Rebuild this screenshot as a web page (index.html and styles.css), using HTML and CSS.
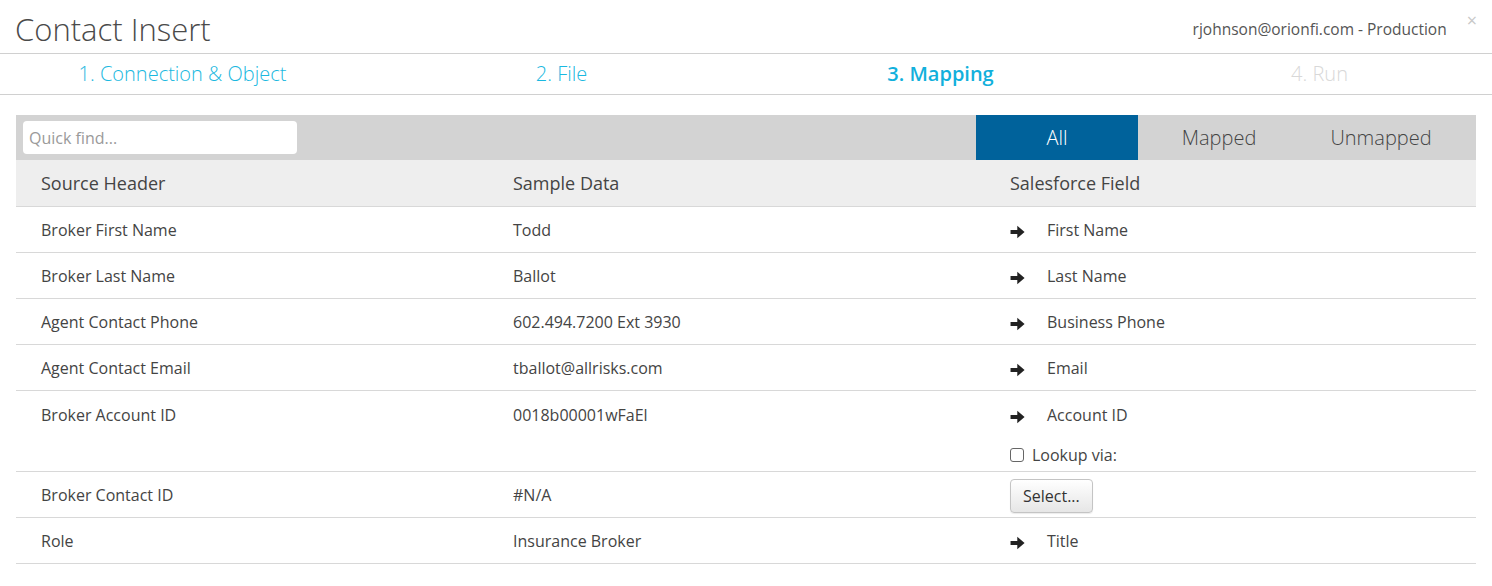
FILE: index.html
```html
<!DOCTYPE html>
<html lang="en">
<head>
    <meta charset="UTF-8">
    <title>Contact Insert</title>
    <link rel="stylesheet" href="styles.css">
</head>
<body>

<!-- Modal header -->
<div class="modal-header">
    <h1 class="modal-title">Contact Insert</h1>
    <span class="org">rjohnson@orionfi.com - Production</span>
    <span class="close">&times;</span>
</div>

<!-- Wizard steps -->
<div class="steps">
    <div class="step done">1. Connection &amp; Object</div>
    <div class="step done">2. File</div>
    <div class="step active">3. Mapping</div>
    <div class="step todo">4. Run</div>
</div>

<div class="content">
    <div class="toolbar">
        <input class="quick-find" type="text" placeholder="Quick find...">
        <div class="filter">
            <button class="filter-btn selected">All</button>
            <button class="filter-btn">Mapped</button>
            <button class="filter-btn">Unmapped</button>
        </div>
    </div>

    <div class="grid head">
        <div class="cell">Source Header</div>
        <div class="cell">Sample Data</div>
        <div class="cell">Salesforce Field</div>
    </div>

    <div class="grid row">
        <div class="cell">Broker First Name</div>
        <div class="cell">Todd</div>
        <div class="cell field"><svg class="arrow" viewBox="0 0 14 13"><path d="M0.5 4.6h6.3V0.6L13.6 6.5 6.8 12.4V8.4H0.5z"/></svg>First Name</div>
    </div>
    <div class="grid row">
        <div class="cell">Broker Last Name</div>
        <div class="cell">Ballot</div>
        <div class="cell field"><svg class="arrow" viewBox="0 0 14 13"><path d="M0.5 4.6h6.3V0.6L13.6 6.5 6.8 12.4V8.4H0.5z"/></svg>Last Name</div>
    </div>
    <div class="grid row">
        <div class="cell">Agent Contact Phone</div>
        <div class="cell">602.494.7200 Ext 3930</div>
        <div class="cell field"><svg class="arrow" viewBox="0 0 14 13"><path d="M0.5 4.6h6.3V0.6L13.6 6.5 6.8 12.4V8.4H0.5z"/></svg>Business Phone</div>
    </div>
    <div class="grid row">
        <div class="cell">Agent Contact Email</div>
        <div class="cell">tballot@allrisks.com</div>
        <div class="cell field"><svg class="arrow" viewBox="0 0 14 13"><path d="M0.5 4.6h6.3V0.6L13.6 6.5 6.8 12.4V8.4H0.5z"/></svg>Email</div>
    </div>
    <div class="grid row tall">
        <div class="cell">Broker Account ID</div>
        <div class="cell">0018b00001wFaEl</div>
        <div class="cell">
            <div class="field"><svg class="arrow" viewBox="0 0 14 13"><path d="M0.5 4.6h6.3V0.6L13.6 6.5 6.8 12.4V8.4H0.5z"/></svg>Account ID</div>
            <label class="lookup"><span class="check"></span>Lookup via:</label>
        </div>
    </div>
    <div class="grid row">
        <div class="cell">Broker Contact ID</div>
        <div class="cell">#N/A</div>
        <div class="cell"><button class="select-btn">Select...</button></div>
    </div>
    <div class="grid row">
        <div class="cell">Role</div>
        <div class="cell">Insurance Broker</div>
        <div class="cell field"><svg class="arrow" viewBox="0 0 14 13"><path d="M0.5 4.6h6.3V0.6L13.6 6.5 6.8 12.4V8.4H0.5z"/></svg>Title</div>
    </div>
</div>

</body>
</html>
```

FILE: styles.css
```css
body {
    margin: 0;
    font-family: "Open Sans", sans-serif;
    color: #444;
    background: #fff;
    overflow: hidden;
}

/* Header */
.modal-header {
    display: flex;
    align-items: center;
    height: 49px;
    padding: 4px 15px 0;
    border-bottom: 1px solid #d0d0d0;
}

.modal-title {
    flex: 1;
    margin: 0;
    font-size: 31px;
    font-weight: 300;
    color: #4a4a4a;
}

.org {
    font-size: 15.5px;
    color: #555;
    margin-right: 20px;
}

.close {
    align-self: flex-start;
    margin-top: 4px;
    font-size: 18px;
    color: #c8c8c8;
}

/* Steps */
.steps {
    display: grid;
    grid-template-columns: repeat(4, 379px);
    margin-left: -7px;
    height: 40px;
    border-bottom: 1px solid #d0d0d0;
    align-items: center;
}

.step {
    text-align: center;
    font-size: 20px;
    font-weight: 300;
    color: #1ab8e0;
    margin-top: -2px;
}

.step.active {
    font-weight: 600;
    color: #12b0dc;
}

.step.todo {
    color: #d8d8d8;
}

/* Content */
.content {
    padding: 20px 16px 0;
}

.toolbar {
    display: flex;
    align-items: center;
    justify-content: space-between;
    height: 45px;
    background: #d3d3d3;
    padding: 0 14px 0 7px;
}

.quick-find {
    box-sizing: border-box;
    width: 274px;
    height: 33px;
    border: none;
    border-radius: 4px;
    padding: 0 6px;
    font-family: "Open Sans", sans-serif;
    font-size: 16px;
    color: #444;
}

.quick-find::placeholder {
    color: #9a9a9a;
}

.filter {
    display: flex;
    height: 45px;
}

.filter-btn {
    width: 162px;
    border: none;
    background: transparent;
    font-family: "Open Sans", sans-serif;
    font-size: 20px;
    font-weight: 300;
    color: #444;
}

.filter-btn.selected {
    background: #00629b;
    color: #fff;
}

/* Table */
.grid {
    display: grid;
    grid-template-columns: 472px 497px 1fr;
    border-bottom: 1px solid #d8d8d8;
}

.cell {
    padding-left: 25px;
}

.head {
    height: 46px;
    align-items: center;
    background: #eee;
    font-size: 18px;
    color: #444;
}

.row {
    height: 45px;
    align-items: center;
    font-size: 16px;
    color: #444;
}

.row.tall {
    height: 81px;
    align-items: start;
    padding-top: 13px;
    box-sizing: border-box;
}

.row.tall .cell {
    line-height: 22px;
}

.field {
    display: flex;
    align-items: center;
}

.arrow {
    width: 15px;
    height: 14px;
    margin: 4px 22px 0 0;
    fill: #222;
}

.lookup {
    display: flex;
    align-items: center;
    margin-top: 18px;
}

.check {
    box-sizing: border-box;
    width: 14px;
    height: 14px;
    border: 1px solid #666;
    border-radius: 3px;
    margin-right: 8px;
}

.select-btn {
    height: 34px;
    margin-top: 2px;
    padding: 0 12px;
    font-family: "Open Sans", sans-serif;
    font-size: 16px;
    color: #333;
    background: linear-gradient(#fff, #e6e6e6);
    border: 1px solid #c4c4c4;
    border-radius: 4px;
    box-shadow: 0 1px 1px rgba(0, 0, 0, 0.08);
}
```
